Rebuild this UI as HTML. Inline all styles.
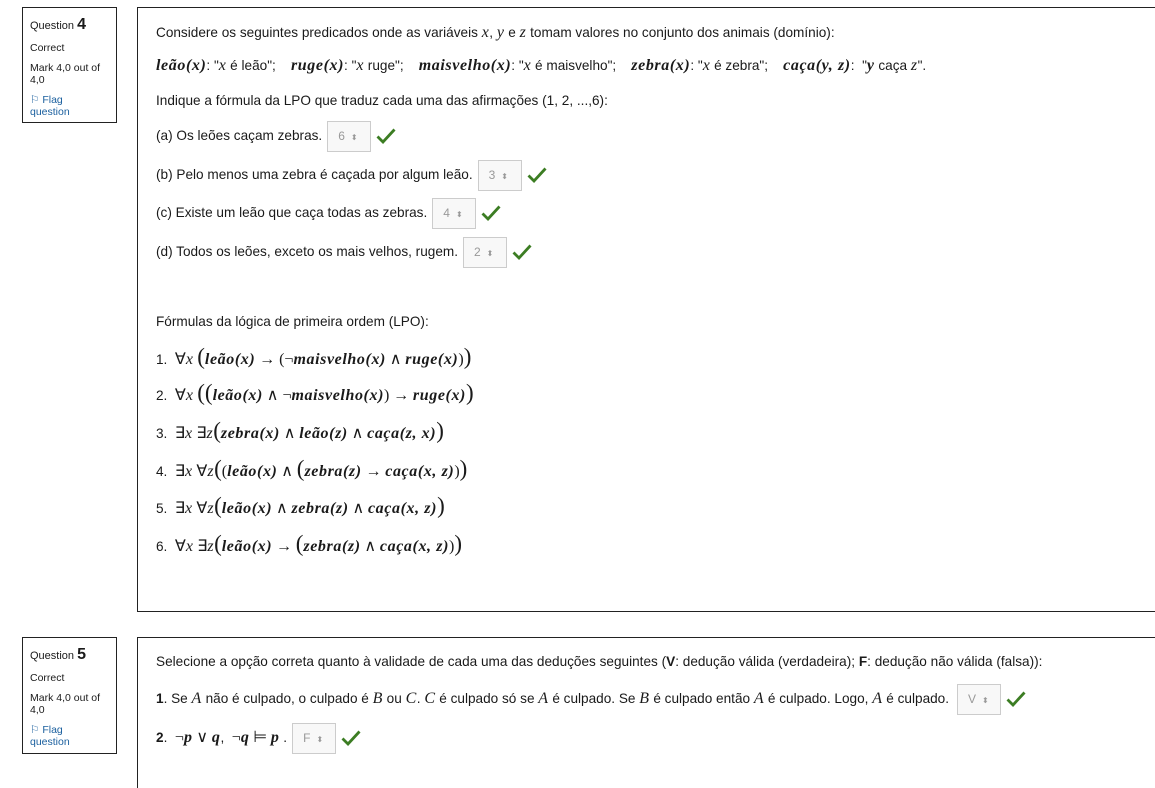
<!DOCTYPE html>
<html><head><meta charset="utf-8"><style>
html,body{margin:0;width:1155px;height:788px;overflow:hidden}
body{background:#fff;font-family:"Liberation Sans",sans-serif;font-size:13.6px;color:#1a1a1a;position:relative}
.info{position:absolute;left:22px;width:95px;border:1px solid #222;box-sizing:border-box;padding:8px 7px;font-size:10.5px;line-height:1.1}
.info .q{font-size:11px}.info .q b{font-size:16px}
.info p{margin:0 0 9px}
.info a{color:#1a5f9e;display:block;width:50px}
.box{position:absolute;left:137px;width:1018px;border:1px solid #222;border-right:none;box-sizing:border-box}
.l{position:absolute;left:156px;white-space:nowrap;height:32px;line-height:32px}
.m{font-family:"Liberation Serif",serif;font-style:italic;font-weight:bold;font-size:16px;letter-spacing:0.6px}
.mi{font-family:"Liberation Serif",serif;font-style:italic;font-size:16px;letter-spacing:0.5px}
.s{font-family:"Liberation Serif",serif;font-size:16px}
.sel{display:inline-block;vertical-align:middle;width:44px;height:31px;border:1px solid #ccc;background:#f8f8f8;box-sizing:border-box;color:#999;font-size:12px;line-height:29px;padding-left:10px;margin-left:5px}
.sel span{font-size:8px;margin-left:6px}
.ck{margin-left:5px;width:20px;height:16px;vertical-align:middle}
.big{font-size:23px;font-family:"Liberation Serif",serif;font-weight:normal;font-style:normal}
</style></head><body>
<svg width="0" height="0" style="position:absolute"><defs><symbol id="c" viewBox="0 0 20 16"><path d="M1.5 8.5 L7 14 L18.5 1.5" fill="none" stroke="#3c7d23" stroke-width="2.8"/></symbol></defs></svg>

<div class="info" style="top:7px;height:116px"><p class="q">Question <b>4</b></p><p>Correct</p><p>Mark 4,0 out of 4,0</p><a>⚐ Flag question</a></div>
<div class="box" style="top:7px;height:605px"></div>

<div class="l" style="top:17px">Considere os seguintes predicados onde as variáveis <span class="mi">x</span>, <span class="mi">y</span> e <span class="mi">z</span> tomam valores no conjunto dos animais (domínio):</div>
<div class="l" style="top:50px"><span class="m">leão(x)</span>: "<span class="mi">x</span> é leão";&nbsp;&nbsp;&nbsp; <span class="m">ruge(x)</span>: "<span class="mi">x</span> ruge";&nbsp;&nbsp;&nbsp; <span class="m">maisvelho(x)</span>: "<span class="mi">x</span> é maisvelho";&nbsp;&nbsp;&nbsp; <span class="m">zebra(x)</span>: "<span class="mi">x</span> é zebra";&nbsp;&nbsp;&nbsp; <span class="m">caça(y, z)</span>:&nbsp; "<span class="m">y</span> caça <span class="mi">z</span>".</div>
<div class="l" style="top:85px">Indique a fórmula da LPO que traduz cada uma das afirmações (1, 2, ...,6):</div>
<div class="l" style="top:120px">(a) Os leões caçam zebras.<span class="sel">6<span>⬍</span></span><svg class="ck"><use href="#c"/></svg></div>
<div class="l" style="top:159px">(b) Pelo menos uma zebra é caçada por algum leão.<span class="sel">3<span>⬍</span></span><svg class="ck"><use href="#c"/></svg></div>
<div class="l" style="top:197px">(c) Existe um leão que caça todas as zebras.<span class="sel">4<span>⬍</span></span><svg class="ck"><use href="#c"/></svg></div>
<div class="l" style="top:236px">(d) Todos os leões, exceto os mais velhos, rugem.<span class="sel">2<span>⬍</span></span><svg class="ck"><use href="#c"/></svg></div>
<div class="l" style="top:306px">Fórmulas da lógica de primeira ordem (LPO):</div>
<div class="l" style="top:341px">1.&nbsp; <span class="s">∀</span><span class="mi">x</span>&nbsp;<span class="big">(</span><span class="m">leão(x)</span> <span class="s">→ (¬</span><span class="m">maisvelho(x)</span> <span class="s">∧</span> <span class="m">ruge(x)</span><span class="s">)</span><span class="big">)</span></div>
<div class="l" style="top:377px">2.&nbsp; <span class="s">∀</span><span class="mi">x</span>&nbsp;<span class="big">((</span><span class="m">leão(x)</span> <span class="s">∧ ¬</span><span class="m">maisvelho(x)</span><span class="s">)</span> <span class="s">→</span> <span class="m">ruge(x)</span><span class="big">)</span></div>
<div class="l" style="top:415px">3.&nbsp; <span class="s">∃</span><span class="mi">x</span> <span class="s">∃</span><span class="mi">z</span><span class="big">(</span><span class="m">zebra(x)</span> <span class="s">∧</span> <span class="m">leão(z)</span> <span class="s">∧</span> <span class="m">caça(z, x)</span><span class="big">)</span></div>
<div class="l" style="top:453px">4.&nbsp; <span class="s">∃</span><span class="mi">x</span> <span class="s">∀</span><span class="mi">z</span><span class="big">(</span><span class="s">(</span><span class="m">leão(x)</span> <span class="s">∧</span> <span class="big">(</span><span class="m">zebra(z)</span> <span class="s">→</span> <span class="m">caça(x, z)</span><span class="s">)</span><span class="big">)</span></div>
<div class="l" style="top:490px">5.&nbsp; <span class="s">∃</span><span class="mi">x</span> <span class="s">∀</span><span class="mi">z</span><span class="big">(</span><span class="m">leão(x)</span> <span class="s">∧</span> <span class="m">zebra(z)</span> <span class="s">∧</span> <span class="m">caça(x, z)</span><span class="big">)</span></div>
<div class="l" style="top:528px">6.&nbsp; <span class="s">∀</span><span class="mi">x</span> <span class="s">∃</span><span class="mi">z</span><span class="big">(</span><span class="m">leão(x)</span> <span class="s">→</span> <span class="big">(</span><span class="m">zebra(z)</span> <span class="s">∧</span> <span class="m">caça(x, z)</span><span class="s">)</span><span class="big">)</span></div>

<div class="info" style="top:637px;height:117px"><p class="q">Question <b>5</b></p><p>Correct</p><p>Mark 4,0 out of 4,0</p><a>⚐ Flag question</a></div>
<div class="box" style="top:637px;height:151px;border-bottom:none"></div>
<div class="l" style="top:646px">Selecione a opção correta quanto à validade de cada uma das deduções seguintes (<b>V</b>: dedução válida (verdadeira); <b>F</b>: dedução não válida (falsa)):</div>
<div class="l" style="top:683px"><b>1</b>. Se <span class="mi">A</span> não é culpado, o culpado é <span class="mi">B</span> ou <span class="mi">C</span>. <span class="mi">C</span> é culpado só se <span class="mi">A</span> é culpado. Se <span class="mi">B</span> é culpado então <span class="mi">A</span> é culpado. Logo, <span class="mi">A</span> é culpado.<span class="sel" style="margin-left:8px">V<span>⬍</span></span><svg class="ck"><use href="#c"/></svg></div>
<div class="l" style="top:722px"><b>2</b>.&nbsp; <span class="s">¬</span><span class="m">p</span> <span class="s">∨</span> <span class="m">q</span>,&nbsp; <span class="s">¬</span><span class="m">q</span> <span class="s">⊨</span> <span class="m">p</span> .<span class="sel">F<span>⬍</span></span><svg class="ck"><use href="#c"/></svg></div>
</body></html>
